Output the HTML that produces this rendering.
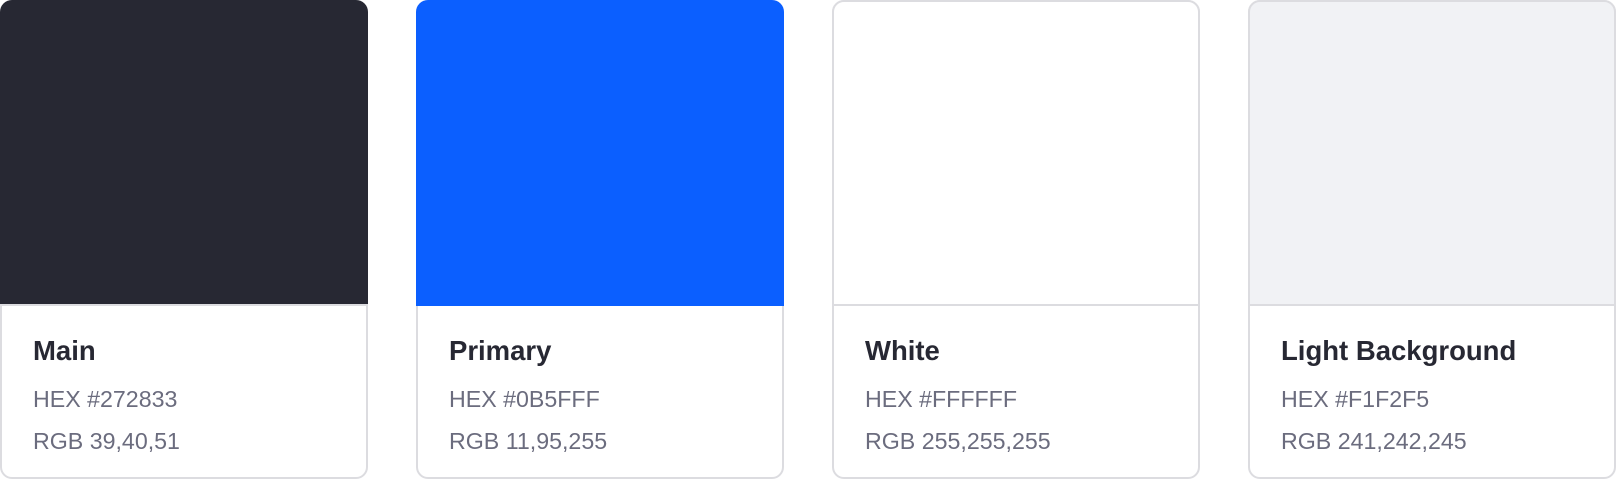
<!DOCTYPE html>
<html><head><style>
body{margin:0;width:1616px;height:480px;background:#fff;font-family:"Liberation Sans",sans-serif;position:relative;overflow:hidden}
.c{position:absolute;top:0;width:368px;height:479px;box-sizing:border-box;border:2px solid #dcdce0;border-radius:12px;background:#fff}
.sw{position:absolute;top:-2px;left:-2px;right:-2px;height:306px;border-radius:12px 12px 0 0;box-sizing:border-box;border-bottom:2px solid #dcdce0}
.lt{border:2px solid #dcdce0}
.t{position:absolute;left:31px;top:333px;font-size:27.5px;font-weight:bold;color:#272833}
.h{position:absolute;left:31px;top:384px;font-size:23.2px;color:#6b6c7e}
.r{position:absolute;left:31px;top:426px;font-size:23.2px;color:#6b6c7e}
</style></head><body>
<div class="c" style="left:0"><div class="sw" style="background:#272833"></div><div class="t">Main</div><div class="h">HEX #272833</div><div class="r">RGB 39,40,51</div></div>
<div class="c" style="left:416px"><div class="sw" style="background:#0b5fff;border-bottom:none"></div><div class="t">Primary</div><div class="h">HEX #0B5FFF</div><div class="r">RGB 11,95,255</div></div>
<div class="c" style="left:832px"><div class="sw lt" style="background:#fff"></div><div class="t">White</div><div class="h">HEX #FFFFFF</div><div class="r">RGB 255,255,255</div></div>
<div class="c" style="left:1248px"><div class="sw lt" style="background:#f1f2f5"></div><div class="t">Light Background</div><div class="h">HEX #F1F2F5</div><div class="r">RGB 241,242,245</div></div>
</body></html>
